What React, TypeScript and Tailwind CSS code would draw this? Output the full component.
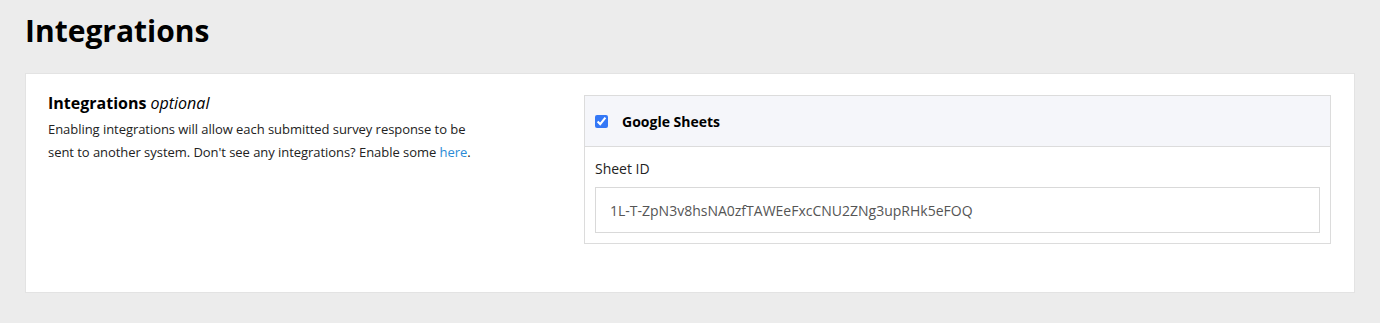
import { useState } from "react";

const App = () => {
  const [enabled, setEnabled] = useState(true);

  return (
    <div className="min-h-[323px] bg-[#ececec] px-[25px] pt-[9px] pb-[30px] font-['Open_Sans',sans-serif] text-black">
      <h1 className="text-[30px] font-bold leading-[44px] mb-[20px]">Integrations</h1>

      <div className="bg-white border border-[#e3e3e3] pl-[22px] pr-[23px] pt-[21px] pb-[48px]">
        <div className="flex gap-[25px]">
          <div className="flex-1 -mt-[3px]">
            <h2 className="text-[16px] font-bold leading-[22px] mb-[4px]">
              Integrations <span className="font-normal italic">optional</span>
            </h2>
            <p className="text-[13px] leading-[23px] text-[#222] max-w-[430px] tracking-[-0.05px]">
              Enabling integrations will allow each submitted survey response to be sent to another
              system. Don't see any integrations? Enable some{" "}
              <a href="#" className="text-[#2a8bd6]">here</a>.
            </p>
          </div>

          <div className="w-[747px] border border-[#dcdcdc]">
            <label className="flex items-center gap-[14px] h-[50px] px-[10px] bg-[#f5f6fa] border-b border-[#dcdcdc] box-content">
              <input
                type="checkbox"
                checked={enabled}
                onChange={(e) => setEnabled(e.target.checked)}
                className="w-[13px] h-[13px] accent-[#3478f6]"
              />
              <span className="text-[14px] font-bold">Google Sheets</span>
            </label>
            <div className="px-[10px] pt-[11px] pb-[10px]">
              <div className="text-[14px] leading-[22px] text-[#222] mb-[7px]">Sheet ID</div>
              <input
                type="text"
                defaultValue="1L-T-ZpN3v8hsNA0zfTAWEeFxcCNU2ZNg3upRHk5eFOQ"
                className="w-full h-[46px] border border-[#d9d9d9] px-[14px] text-[14px] text-[#555] outline-none"
              />
            </div>
          </div>
        </div>
      </div>
    </div>
  );
};

export default App;
